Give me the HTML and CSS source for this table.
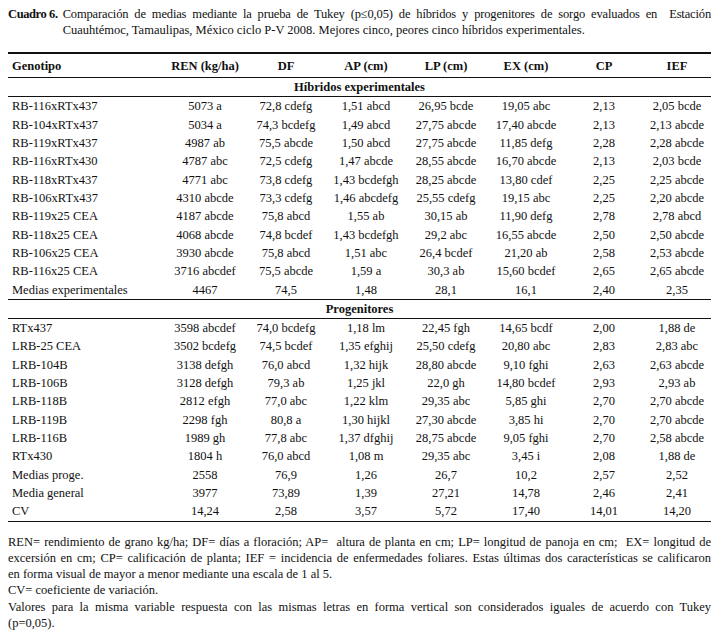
FILE: index.html
```html
<!DOCTYPE html>
<html lang="es">
<head>
<meta charset="utf-8">
<title>Cuadro 6</title>
<link rel="stylesheet" href="styles.css">
</head>
<body>
<div class="page">
  <div class="caption">
    <span class="cap-label">Cuadro 6.</span>
    <span class="cap-text"><span class="cap-line">Comparación de medias mediante la prueba de Tukey (p≤0,05) de híbridos y progenitores de sorgo evaluados en&nbsp; Estación</span><span class="cap-last">Cuauhtémoc, Tamaulipas, México ciclo P-V 2008. Mejores cinco, peores cinco híbridos experimentales.</span></span>
  </div>

  <table class="tbl">
    <colgroup>
      <col class="c-gen"><col class="c-ren"><col class="c-df"><col class="c-ap"><col class="c-lp"><col class="c-ex"><col class="c-cp"><col class="c-ief">
    </colgroup>
    <thead>
      <tr class="head">
        <th class="gen">Genotipo</th><th>REN (kg/ha)</th><th>DF</th><th>AP (cm)</th><th>LP (cm)</th><th>EX (cm)</th><th>CP</th><th>IEF</th>
      </tr>
    </thead>
    <tbody>
      <tr class="section"><td colspan="8">Híbridos experimentales</td></tr>
      <tr><td class="gen">RB-116xRTx437</td><td>5073 a</td><td>72,8 cdefg</td><td>1,51 abcd</td><td>26,95 bcde</td><td>19,05 abc</td><td>2,13</td><td>2,05 bcde</td></tr>
      <tr><td class="gen">RB-104xRTx437</td><td>5034 a</td><td>74,3 bcdefg</td><td>1,49 abcd</td><td>27,75 abcde</td><td>17,40 abcde</td><td>2,13</td><td>2,13 abcde</td></tr>
      <tr><td class="gen">RB-119xRTx437</td><td>4987 ab</td><td>75,5 abcde</td><td>1,50 abcd</td><td>27,75 abcde</td><td>11,85 defg</td><td>2,28</td><td>2,28 abcde</td></tr>
      <tr><td class="gen">RB-116xRTx430</td><td>4787 abc</td><td>72,5 cdefg</td><td>1,47 abcde</td><td>28,55 abcde</td><td>16,70 abcde</td><td>2,13</td><td>2,03 bcde</td></tr>
      <tr><td class="gen">RB-118xRTx437</td><td>4771 abc</td><td>73,8 cdefg</td><td>1,43 bcdefgh</td><td>28,25 abcde</td><td>13,80 cdef</td><td>2,25</td><td>2,25 abcde</td></tr>
      <tr><td class="gen">RB-106xRTx437</td><td>4310 abcde</td><td>73,3 cdefg</td><td>1,46 abcdefg</td><td>25,55 cdefg</td><td>19,15 abc</td><td>2,25</td><td>2,20 abcde</td></tr>
      <tr><td class="gen">RB-119x25 CEA</td><td>4187 abcde</td><td>75,8 abcd</td><td>1,55 ab</td><td>30,15 ab</td><td>11,90 defg</td><td>2,78</td><td>2,78 abcd</td></tr>
      <tr><td class="gen">RB-118x25 CEA</td><td>4068 abcde</td><td>74,8 bcdef</td><td>1,43 bcdefgh</td><td>29,2 abc</td><td>16,55 abcde</td><td>2,50</td><td>2,50 abcde</td></tr>
      <tr><td class="gen">RB-106x25 CEA</td><td>3930 abcde</td><td>75,8 abcd</td><td>1,51 abc</td><td>26,4 bcdef</td><td>21,20 ab</td><td>2,58</td><td>2,53 abcde</td></tr>
      <tr><td class="gen">RB-116x25 CEA</td><td>3716 abcdef</td><td>75,5 abcde</td><td>1,59 a</td><td>30,3 ab</td><td>15,60 bcdef</td><td>2,65</td><td>2,65 abcde</td></tr>
      <tr class="ruled"><td class="gen">Medias experimentales</td><td>4467</td><td>74,5</td><td>1,48</td><td>28,1</td><td>16,1</td><td>2,40</td><td>2,35</td></tr>
      <tr class="section"><td colspan="8">Progenitores</td></tr>
      <tr><td class="gen">RTx437</td><td>3598 abcdef</td><td>74,0 bcdefg</td><td>1,18 lm</td><td>22,45 fgh</td><td>14,65 bcdf</td><td>2,00</td><td>1,88 de</td></tr>
      <tr><td class="gen">LRB-25 CEA</td><td>3502 bcdefg</td><td>74,5 bcdef</td><td>1,35 efghij</td><td>25,50 cdefg</td><td>20,80 abc</td><td>2,83</td><td>2,83 abc</td></tr>
      <tr><td class="gen">LRB-104B</td><td>3138 defgh</td><td>76,0 abcd</td><td>1,32 hijk</td><td>28,80 abcde</td><td>9,10 fghi</td><td>2,63</td><td>2,63 abcde</td></tr>
      <tr><td class="gen">LRB-106B</td><td>3128 defgh</td><td>79,3 ab</td><td>1,25 jkl</td><td>22,0 gh</td><td>14,80 bcdef</td><td>2,93</td><td>2,93 ab</td></tr>
      <tr><td class="gen">LRB-118B</td><td>2812 efgh</td><td>77,0 abc</td><td>1,22 klm</td><td>29,35 abc</td><td>5,85 ghi</td><td>2,70</td><td>2,70 abcde</td></tr>
      <tr><td class="gen">LRB-119B</td><td>2298 fgh</td><td>80,8 a</td><td>1,30 hijkl</td><td>27,30 abcde</td><td>3,85 hi</td><td>2,70</td><td>2,70 abcde</td></tr>
      <tr><td class="gen">LRB-116B</td><td>1989 gh</td><td>77,8 abc</td><td>1,37 dfghij</td><td>28,75 abcde</td><td>9,05 fghi</td><td>2,70</td><td>2,58 abcde</td></tr>
      <tr><td class="gen">RTx430</td><td>1804 h</td><td>76,0 abcd</td><td>1,08 m</td><td>29,35 abc</td><td>3,45 i</td><td>2,08</td><td>1,88 de</td></tr>
      <tr><td class="gen">Medias proge.</td><td>2558</td><td>76,9</td><td>1,26</td><td>26,7</td><td>10,2</td><td>2,57</td><td>2,52</td></tr>
      <tr><td class="gen">Media general</td><td>3977</td><td>73,89</td><td>1,39</td><td>27,21</td><td>14,78</td><td>2,46</td><td>2,41</td></tr>
      <tr class="last"><td class="gen">CV</td><td>14,24</td><td>2,58</td><td>3,57</td><td>5,72</td><td>17,40</td><td>14,01</td><td>14,20</td></tr>
    </tbody>
  </table>

  <div class="notes">
    <span class="jl">REN= rendimiento de grano kg/ha; DF= días a floración; AP=&nbsp; altura de planta en cm; LP= longitud de panoja en cm;&nbsp; EX= longitud de</span>
    <span class="jl">excersión en cm; CP= calificación de planta; IEF = incidencia de enfermedades foliares. Estas últimas dos características se calificaron</span>
    <span class="ln">en forma visual de mayor a menor mediante una escala de 1 al 5.</span>
    <span class="ln">CV= coeficiente de variación.</span>
    <span class="jl">Valores para la misma variable respuesta con las mismas letras en forma vertical son considerados iguales de acuerdo con Tukey</span>
    <span class="ln">(p=0,05).</span>
  </div>
</div>
</body>
</html>
```

FILE: styles.css
```css
html, body {
  margin: 0;
  padding: 0;
  background: #ffffff;
}

body {
  font-family: "Liberation Serif", Tinos, "DejaVu Serif", serif;
  color: #111111;
  font-size: 12.5px;
}

.page {
  width: 703px;
  padding: 6px 8px 0 8px;
}

.caption {
  display: flex;
  gap: 5px;
  line-height: 16px;
  font-size: 12.5px;
}

.cap-label {
  font-weight: bold;
  flex: none;
  white-space: nowrap;
  letter-spacing: -0.4px;
}

.cap-text {
  flex: 1;
  display: flex;
  flex-direction: column;
}

.cap-line {
  text-align: justify;
  text-align-last: justify;
  letter-spacing: -0.15px;
}

.tbl {
  margin-top: 14px;
  width: 703px;
  border-collapse: collapse;
  table-layout: fixed;
  border-top: 2px solid #111;
  border-bottom: 1px solid #111;
}

.c-gen { width: 157px; }
.c-ren { width: 80px; }
.c-df  { width: 82px; }
.c-ap  { width: 78px; }
.c-lp  { width: 82px; }
.c-ex  { width: 78px; }
.c-cp  { width: 78px; }
.c-ief { width: 68px; }

.tbl th,
.tbl td {
  padding: 0;
  text-align: center;
  white-space: nowrap;
  height: 18.35px;
  line-height: 18px;
}

.tbl th {
  font-weight: bold;
  height: 23px;
  border-bottom: 1px solid #111;
}

.tbl .gen {
  text-align: left;
  padding-left: 4px;
}

.section td {
  font-weight: bold;
  text-align: center;
  height: 17px;
  border-bottom: 1px solid #111;
}

.ruled td {
  border-bottom: 1px solid #111;
}

.notes {
  margin-top: 12px;
  font-size: 12.5px;
  line-height: 16.3px;
}

.notes .jl,
.notes .ln {
  display: block;
  white-space: nowrap;
}

.notes .jl {
  text-align: justify;
  text-align-last: justify;
  white-space: normal;
}
```
